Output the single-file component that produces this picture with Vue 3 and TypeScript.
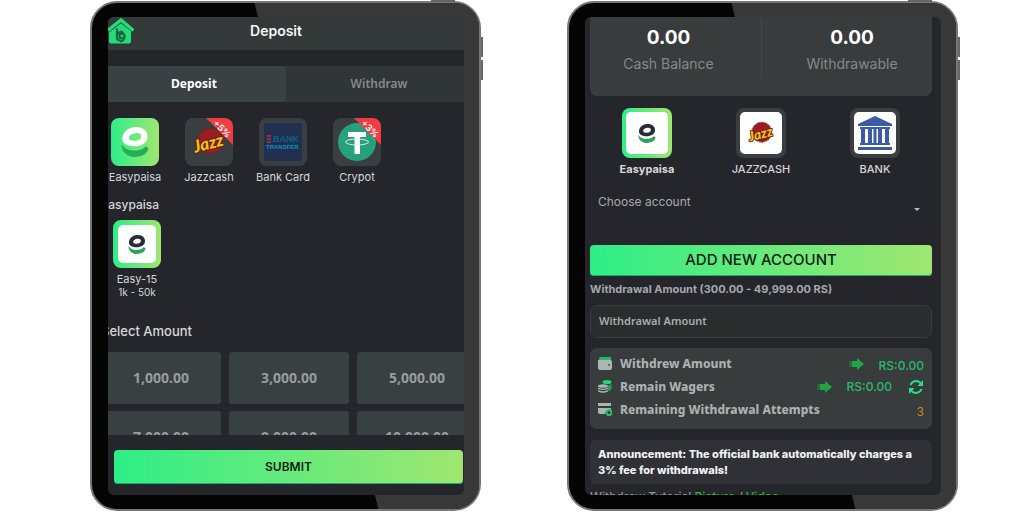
<script setup lang="ts">
import { ref } from 'vue'

interface Method {
  id: string
  label: string
  bonus?: string
}

const depositMethods: Method[] = [
  { id: 'easypaisa', label: 'Easypaisa' },
  { id: 'jazz', label: 'Jazzcash', bonus: '+5%' },
  { id: 'card', label: 'Bank Card' },
  { id: 'crypto', label: 'Crypot', bonus: '+3%' },
]
const withdrawMethods: Method[] = [
  { id: 'easypaisa', label: 'Easypaisa' },
  { id: 'jazz', label: 'JAZZCASH' },
  { id: 'bank', label: 'BANK' },
]
const amounts: string[] = ['1,000.00', '3,000.00', '5,000.00', '7,000.00', '9,000.00', '10,000.00']
const balances = [
  { value: '0.00', label: 'Cash Balance' },
  { value: '0.00', label: 'Withdrawable' },
]

const tab = ref('Deposit')
const depositMethod = ref('easypaisa')
const withdrawMethod = ref('easypaisa')
const withdrawal = ref('')
</script>

<template>
  <main class="page">
    <svg class="defs" aria-hidden="true">
      <symbol id="e-mark" viewBox="0 0 30 32">
        <path class="e-ring" fill-rule="evenodd" d="M15 0C23 -0.500 28.500 4 28.500 10C28.500 17 22 20.500 14.500 20.500C7 20.500 1.500 18 1.500 12.500C1.500 6 7 0.500 15 0ZM16 6.500C12 6.700 8.500 9 8.500 11.800C8.500 14 11 14.800 14.500 14.700C19 14.500 21.500 12.500 21.500 10C21.500 7.500 19.500 6.300 16 6.500Z" />
        <path class="e-swoosh" d="M0.500 18.500C5 25 11 25.500 17 25C22 24.500 25 22 26 20.500L29.500 22.500C28.500 29 22 32 15 32C7 32 0.500 27 0.500 18.500Z" />
      </symbol>
      <symbol id="jazz-mark" viewBox="0 0 32 30">
        <circle cx="17" cy="14" r="12.500" fill="#9d1c22" />
        <circle cx="17" cy="14" r="12.500" fill="none" stroke="#6f2226" stroke-width="1" stroke-dasharray="2 1" />
        <text x="0" y="22" transform="rotate(-14 16 16)" font-family="Lato, sans-serif" font-size="17" font-weight="900" font-style="italic" fill="#f9bd18" stroke="#5a2414" stroke-width="2" paint-order="stroke">Jazz</text>
      </symbol>
      <symbol id="arrow" viewBox="0 0 15 12">
        <path d="M0 3H3V9H0Z" fill="#1f8a3c" opacity=".5" />
        <path d="M3 3H8V0L15 6L8 12V9H3Z" fill="#20a446" />
      </symbol>
    </svg>

    <section class="tablet">
      <i class="key top-key"></i><i class="key side-key"></i><i class="key side-key lower"></i>
      <div class="screen">
        <header class="bar">
          <svg class="home" viewBox="0 0 26 26" aria-label="Home">
            <path d="M13 5L23 13V24Q23 26 21 26H3Q1 26 1 24V14Z" fill="#22dc79" />
            <path d="M0 15L13 5L26 15" fill="none" stroke="#2f3535" stroke-width="1.500" />
            <path d="M0 13L13 2.500L25.500 13" fill="none" stroke="#22dc79" stroke-width="3.500" />
            <path d="M9 11V20Q9 23 12 23M9 17Q13 12 15 16" fill="none" stroke="#17643f" stroke-width="2.200" />
            <circle cx="14" cy="18.500" r="2.500" fill="none" stroke="#17643f" stroke-width="2" />
            <path d="M16.500 18.500Q17 23 12 24" fill="none" stroke="#17643f" stroke-width="1.800" />
          </svg>
          <h1>Deposit</h1>
        </header>
        <nav class="tabs">
          <button v-for="t in ['Deposit', 'Withdraw']" :key="t" type="button" :class="{ active: t === tab }" @click="tab = t">{{ t }}</button>
        </nav>

        <div class="scroller">
          <div class="methods">
            <button v-for="m in depositMethods" :key="m.id" type="button" class="method" @click="depositMethod = m.id">
              <span class="tile" :class="{ picked: m.id === depositMethod }">
                <svg v-if="m.id === 'easypaisa'" class="e-large"><use href="#e-mark" /></svg>
                <svg v-else-if="m.id === 'jazz'" class="jazz-large"><use href="#jazz-mark" /></svg>
                <svg v-else-if="m.id === 'card'" class="fill" viewBox="0 0 48 48">
                  <rect x="5" y="5" width="38" height="38" rx="2" fill="#21304f" />
                  <path d="M8 18H12M8 21H12M8 24H12" stroke="#b5303c" stroke-width="1.500" />
                  <text x="14" y="24" font-family="Liberation Sans, sans-serif" font-size="9" font-weight="700" fill="#0e6089">BANK</text>
                  <text x="7" y="31" font-family="Liberation Sans, sans-serif" font-size="6" font-weight="700" fill="#128fc4">TRANSFER</text>
                </svg>
                <svg v-else class="fill" viewBox="0 0 48 48">
                  <circle cx="24" cy="24" r="19" fill="#26a17b" />
                  <path d="M15 14H33V19H27V36H21.500V19H15Z" fill="#fff" />
                  <ellipse cx="24" cy="24" rx="11.500" ry="3" fill="none" stroke="#d5f3e8" stroke-width="1" />
                </svg>
                <svg v-if="m.bonus" class="fill" viewBox="0 0 48 48">
                  <path d="M21 0H41Q48 2 48 8V27Z" fill="#ee3e42" />
                  <text x="37" y="14" transform="rotate(45 37 11)" text-anchor="middle" font-family="Inter, sans-serif" font-size="9" font-weight="600" fill="#fff">{{ m.bonus }}</text>
                </svg>
              </span>
              <span class="name">{{ m.label }}</span>
            </button>
          </div>

          <h2 class="channel-title">Easypaisa</h2>
          <button type="button" class="channel">
            <span class="tile picked framed"><svg class="e-small"><use href="#e-mark" /></svg></span>
            <span class="name">Easy-15</span>
            <span class="range">1k - 50k</span>
          </button>

          <h2 class="amount-title">Select Amount</h2>
          <div class="amounts">
            <button v-for="a in amounts" :key="a" type="button">{{ a }}</button>
          </div>
        </div>
        <footer class="foot"><button type="button" class="cta submit">SUBMIT</button></footer>
      </div>
    </section>

    <section class="tablet">
      <i class="key top-key"></i><i class="key side-key"></i><i class="key side-key lower"></i>
      <div class="screen withdraw">
        <div class="balances">
          <div v-for="b in balances" :key="b.label"><strong>{{ b.value }}</strong><span>{{ b.label }}</span></div>
        </div>

        <div class="options">
          <button v-for="m in withdrawMethods" :key="m.id" type="button" class="method" :class="{ chosen: m.id === withdrawMethod }" @click="withdrawMethod = m.id">
            <span class="tile framed wide" :class="{ picked: m.id === withdrawMethod }">
              <svg v-if="m.id === 'easypaisa'" class="e-small"><use href="#e-mark" /></svg>
              <svg v-else-if="m.id === 'jazz'" class="jazz-small"><use href="#jazz-mark" /></svg>
              <svg v-else class="bank" viewBox="0 0 36 36" fill="#3b5ba5">
                <path d="M18 1L35 9V11H1V9ZM3 12H33V14H3ZM4 14H8V28H4ZM11 14H15V28H11ZM21 14H25V28H21ZM28 14H32V28H28ZM16.500 14H19.500V28H16.500ZM3 28H33V30H3ZM1 32H35V35H1Z" />
              </svg>
            </span>
            <span class="name">{{ m.label }}</span>
          </button>
        </div>

        <div class="picker">
          <select aria-label="Choose account"><option>Choose account</option></select>
          <svg class="caret" viewBox="0 0 6 3"><path d="M0 0H6L3 3Z" fill="#b5b8ba" /></svg>
        </div>
        <button type="button" class="cta add">ADD NEW ACCOUNT</button>

        <label class="field-label" for="amount">Withdrawal Amount (300.00 - 49,999.00 RS)</label>
        <input id="amount" v-model="withdrawal" class="field" type="text" placeholder="Withdrawal Amount" />

        <ul class="facts">
          <li>
            <svg viewBox="0 0 14 13"><path d="M1 2Q1 0 3 0H13V4H1Z" fill="#24b86a" /><path d="M0 3H12Q14 3 14 5V11Q14 13 12 13H2Q0 13 0 11Z" fill="#abb5b3" /><circle cx="11" cy="8" r="1" fill="#4a5251" /></svg>
            <b>Withdrew Amount</b>
            <svg class="arrow"><use href="#arrow" /></svg>
            <span class="sum low">RS:0.00</span>
          </li>
          <li>
            <svg viewBox="0 0 14 13"><ellipse cx="9" cy="2" rx="4.500" ry="2" fill="#26d579" /><path d="M10 5.500Q13 5 13.500 3.500V9Q13 11 10 11Z" fill="#249b5c" /><ellipse cx="5" cy="6" rx="5" ry="1.800" fill="#abb5b3" /><path d="M0 7.500Q5 10 10 7.500V9Q5 11 0 9ZM0 10Q5 12.500 10 10V11.500Q5 14 0 11.500Z" fill="#abb5b3" /></svg>
            <b>Remain Wagers</b>
            <svg class="arrow"><use href="#arrow" /></svg>
            <span class="sum">RS:0.00</span>
            <button type="button" class="refresh" aria-label="Refresh">
              <svg viewBox="0 0 16 16"><path d="M2.500 6A6 6 0 0 1 12.500 4M13.500 10A6 6 0 0 1 3.500 12" fill="none" stroke="#27df87" stroke-width="2" /><path d="M15 1V7H9.500ZM1 15V9H6.500Z" fill="#27df87" /></svg>
            </button>
          </li>
          <li>
            <svg viewBox="0 0 14 13"><path d="M0 0H13V3H0ZM0 5H13V7Q8 6 7 11H2Q0 11 0 9Z" fill="#abb5b3" /><circle cx="11" cy="9.500" r="2.500" fill="#334" stroke="#23c56f" stroke-width="2" /></svg>
            <b>Remaining Withdrawal Attempts</b>
            <span class="count">3</span>
          </li>
        </ul>

        <p class="notice">Announcement: The official bank automatically charges a 3% fee for withdrawals!</p>
        <p class="tutorial">Withdraw Tutorial <a href="#picture">Picture</a> / <a href="#video">Video</a></p>
      </div>
    </section>
  </main>
</template>

<style>
body { background: #fff; }
</style>

<style scoped>
.page, .page * { box-sizing: border-box; }
.page {
  display: flex;
  gap: 86px;
  height: 100vh;
  padding: 1px 66px 1px 90px;
  overflow: hidden;
  background: #fff;
  color: #d5d7d8;
  font: 11px/14px Inter, "Liberation Sans", sans-serif;
}
h1, h2, p, ul { margin: 0; padding: 0; }
button { padding: 0; border: 0; background: none; color: inherit; font: inherit; cursor: pointer; }
.defs { position: absolute; width: 0; height: 0; }
.e-ring { fill: var(--ring, #2d2a38); }
.e-swoosh { fill: var(--swoosh, #2aa65a); }

/* device shell */
.tablet {
  position: relative;
  display: flex;
  flex: 1;
  min-width: 0;
  padding: 14px 15px 14px 16px;
  border: 2px solid #777;
  border-radius: 27px;
  background: #050505;
}
.tablet::before {
  content: "";
  position: absolute;
  inset: 0;
  border-radius: 24px;
  background: #383838;
  clip-path: polygon(42% 0, 100% 0, 100% 100%, 74% 100%);
}
.key { position: absolute; background: #666; }
.top-key { top: -3px; right: 24px; width: 24px; height: 2px; }
.side-key { top: 34px; right: -4px; width: 2px; height: 20px; }
.side-key.lower { top: 57px; }
.screen {
  position: relative;
  display: flex;
  flex: 1;
  flex-direction: column;
  min-width: 0;
  overflow: hidden;
  border-radius: 6px;
  background: #25262c;
}

/* deposit */
.bar { position: relative; flex: none; height: 33px; background: #333838; }
.bar h1 { padding-right: 20px; color: #f5f6f6; font-size: 14px; font-weight: 600; line-height: 28px; text-align: center; }
.home { position: absolute; top: 0; left: 0; width: 26px; height: 27px; }
.tabs { display: grid; flex: none; grid-template-columns: 1fr 1fr; height: 36px; margin-top: 16px; background: #303637; }
.tabs button { padding-right: 6px; color: #85898a; font: 600 12px/36px "Noto Sans", sans-serif; }
.tabs .active { border-radius: 0 3px 3px 0; background: #3a4142; color: #fff; font-weight: 700; }
.tabs button:last-child { padding: 0 0 0 8px; }
.scroller { flex: 1; min-height: 0; margin: 16px -13px 0 -7px; overflow: hidden; }
.methods { display: grid; grid-template-columns: repeat(4, 74px); margin-left: -3px; }
.method { display: flex; flex-direction: column; align-items: center; }
.tile {
  position: relative;
  display: grid;
  width: 48px;
  height: 48px;
  place-items: center;
  overflow: hidden;
  border-radius: 8px;
  background: #393f40;
}
.tile.picked { background: linear-gradient(90deg, #2eee87, #a0e670); }
.tile.framed::before { content: ""; position: absolute; inset: 5px; border-radius: 5px; background: #fff; }
.tile svg { position: relative; grid-area: 1 / 1; }
.tile .fill { width: 48px; height: 48px; }
.e-large { width: 28px; height: 30px; --ring: #fff; --swoosh: #25ad57; }
.e-small { width: 18px; height: 19px; }
.jazz-large { width: 32px; height: 30px; }
.jazz-small { width: 26px; height: 24px; }
.bank { width: 36px; height: 36px; }
.name { margin-top: 4px; white-space: nowrap; }
.channel-title { margin: 14px 0 8px; font-size: 12px; font-weight: 500; line-height: 14px; }
.channel { display: flex; flex-direction: column; align-items: center; margin-left: 12px; font-size: 11px; }
.channel .name { line-height: 14px; }
.range { font-size: 10px; line-height: 12px; }
.amount-title { margin: 26px 0 14px; font-size: 13px; font-weight: 500; line-height: 14px; }
.amounts { display: grid; grid-template-columns: 1fr 1fr 1fr; gap: 7px 8px; }
.amounts button { height: 52px; border-radius: 3px; background: #394041; color: #999d9e; font: 700 14px/52px "Noto Sans", sans-serif; }
.foot { flex: none; padding: 15px 1px 11px 6px; }
.cta {
  width: 100%;
  border-radius: 4px;
  background: linear-gradient(90deg, #2eee87, #a0e670);
  box-shadow: inset 0 -1px #1cae6c;
  color: #101c12;
  text-align: center;
}
.submit { display: block; height: 34px; font-size: 12px; font-weight: 600; }

/* withdraw */
.withdraw { padding: 0 9px 0 5px; }
.balances { display: grid; flex: none; grid-template-columns: 1fr 1fr; height: 79px; border-radius: 0 0 7px 7px; background: #383c3c; text-align: center; }
.balances div { display: flex; flex-direction: column; gap: 2px; height: 62px; padding: 9px 14px 0 0; }
.balances div + div { padding: 9px 0 0 10px; border-left: 1px solid #424747; }
.balances strong { color: #fff; font-size: 19px; line-height: 24px; }
.balances span { color: #85898a; font-size: 14px; line-height: 24px; }
.options { display: grid; grid-template-columns: 1fr 1fr 1fr; margin-top: 12px; }
.options .name { font-weight: 500; }
.options .chosen .name { font-weight: 700; }
.wide { width: 50px; height: 50px; }
.tile.wide::before { inset: 4px; }
.picker { position: relative; margin-top: 14px; }
.picker select { width: 100%; height: 24px; padding: 0 8px; border: 0; appearance: none; background: none; color: #a7a9ac; font: 12px/24px Inter, sans-serif; }
.caret { position: absolute; top: 18px; right: 12px; width: 6px; height: 3px; }
.add { flex: none; height: 31px; margin-top: 31px; padding-bottom: 2px; font-size: 15px; font-weight: 500; }
.field-label { margin-top: 6px; color: #a4a8aa; font-size: 11px; font-weight: 700; line-height: 14px; }
.field { flex: none; width: 100%; height: 33px; margin-top: 9px; padding: 0 8px 2px; border: 1px solid #383b3e; border-radius: 7px; background: #292d2e; color: #ddd; font: 600 11px/28px "Noto Sans", sans-serif; }
.field::placeholder { color: #a7acac; opacity: 1; }
.facts { flex: none; margin-top: 10px; padding: 4px 8px 8px; border-radius: 7px; background: #383c3c; list-style: none; }
.facts li { display: flex; align-items: center; height: 23px; }
.facts li > svg:first-child { width: 14px; height: 13px; margin-right: 8px; }
.facts b { color: #a9b2b0; font: 800 12px/20px "Noto Sans", sans-serif; }
.facts .arrow { width: 15px; height: 12px; margin-left: auto; }
.sum { margin-left: 15px; color: #29b973; font-size: 12px; font-weight: 500; }
.sum.low { padding-top: 4px; }
.refresh { width: 16px; height: 16px; margin-left: 16px; }
.refresh svg { display: block; width: 16px; height: 16px; }
.count { margin-left: auto; padding-top: 4px; color: #c18a25; font-size: 12px; }
.notice { flex: none; margin-top: 11px; padding: 6px 8px; border-radius: 6px; background: #303137; color: #f0f1f2; font-size: 11px; font-weight: 800; line-height: 16px; }
.tutorial { flex: none; margin-top: 6px; color: #8d9193; font-size: 12px; font-weight: 500; line-height: 14px; white-space: nowrap; }
.tutorial a { color: #25b83b; text-decoration: none; }
</style>
